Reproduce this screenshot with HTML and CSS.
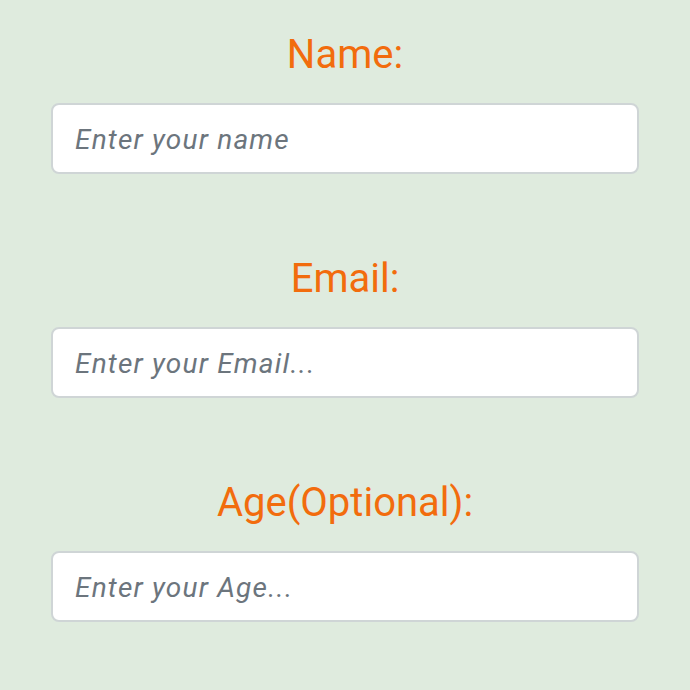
FILE: index.html
```html
<!DOCTYPE html>
<html>
<head>
<meta charset="utf-8">
<link rel="stylesheet" href="styles.css">
</head>
<body>
<form class="form">
  <div class="field">
    <label class="label" for="name">Name:</label>
    <input class="input" id="name" type="text" placeholder="Enter your name">
  </div>
  <div class="field">
    <label class="label" for="email">Email:</label>
    <input class="input" id="email" type="email" placeholder="Enter your Email...">
  </div>
  <div class="field">
    <label class="label" for="age">Age(Optional):</label>
    <input class="input" id="age" type="text" placeholder="Enter your Age...">
  </div>
</form>
</body>
</html>
```
FILE: styles.css
```css
html, body {
  margin: 0;
  padding: 0;
  background: #dfebde;
  font-family: Roboto, "Noto Sans", sans-serif;
}
.form {
  display: flex;
  flex-direction: column;
  gap: 80px;
  padding: 30px 51px 0;
}
.field {
  display: flex;
  flex-direction: column;
  gap: 25px;
}
.label {
  display: block;
  text-align: center;
  color: #f26c0d;
  font-size: 40px;
  line-height: 46px;
  padding-top: 2px;
}
.input {
  box-sizing: border-box;
  width: 100%;
  height: 71px;
  margin: 0;
  border: 2px solid #cfd5d6;
  border-radius: 8px;
  background: #fff;
  padding: 2px 22px 0;
  font-family: Roboto, sans-serif;
  font-size: 28px;
  letter-spacing: 1.2px;
  outline: none;
}
.input::placeholder {
  color: #6c757d;
  font-style: italic;
  opacity: 1;
}
```
